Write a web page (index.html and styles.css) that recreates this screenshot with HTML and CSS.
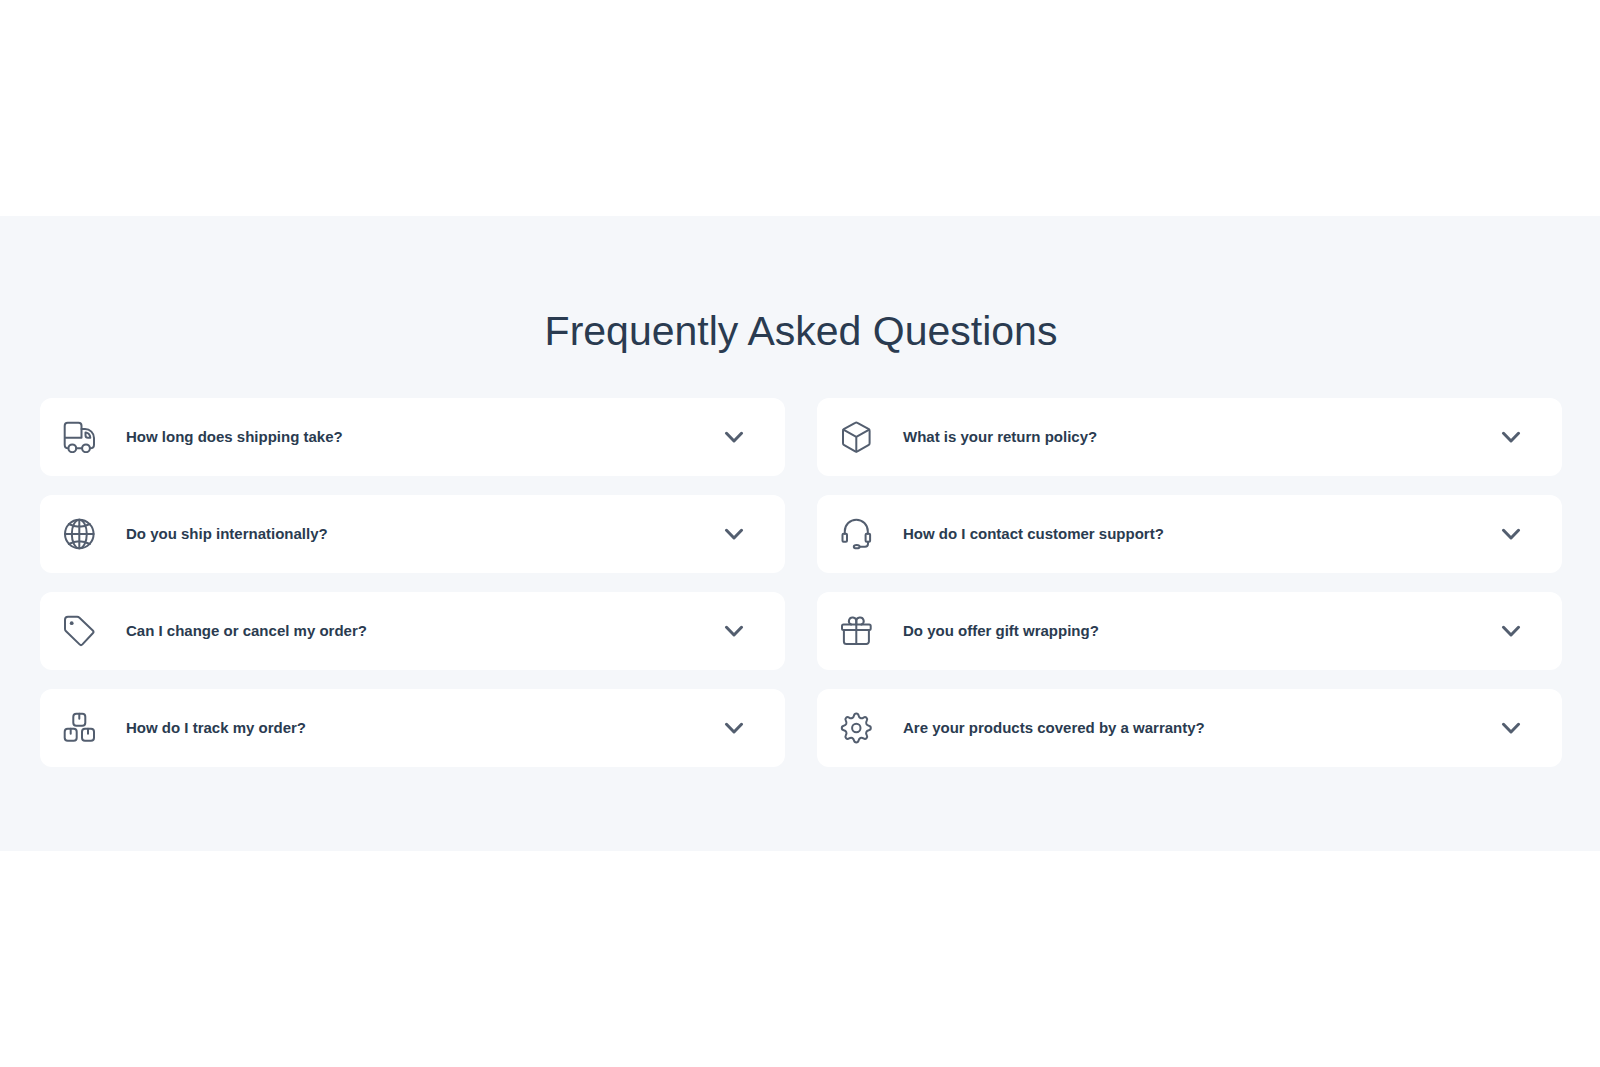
FILE: index.html
```html
<!DOCTYPE html>
<html lang="en">
<head>
    <meta charset="utf-8">
    <meta name="viewport" content="width=device-width, initial-scale=1">
    <title>Frequently Asked Questions</title>
    <link rel="stylesheet" href="styles.css">
</head>
<body>

<svg class="sprite" aria-hidden="true">
    <symbol id="chevron" viewBox="0 0 20 12">
        <path d="M2.5 2.3l7.5 7.7 7.5-7.7"/>
    </symbol>
</svg>

<section class="faq">
    <h2 class="faq-title">Frequently Asked Questions</h2>

    <div class="faq-grid">

        <button type="button" class="faq-item" aria-expanded="false">
            <svg class="icon" viewBox="0 0 32 32" aria-hidden="true">
                <path d="M5.3 27.3q-3.6 0-3.6-3.600V4.700a3 3 0 0 1 3-3h10.800a3 3 0 0 1 3 3v12H1.700"/>
                <path d="M18.500 8H22a9 9 0 0 1 9 9v6.700q0 3.600-4 3.600M13.300 27.300H19"/>
                <path d="M22.500 11.600h.8q3.700 1 4 5.200H25a2.500 2.500 0 0 1-2.500-2.500z"/>
                <circle cx="9.3" cy="27.3" r="3.9"/>
                <circle cx="23" cy="27.3" r="3.9"/>
            </svg>
            <span class="question">How long does shipping take?</span>
            <svg class="chevron" aria-hidden="true"><use href="#chevron"/></svg>
        </button>

        <button type="button" class="faq-item" aria-expanded="false">
            <svg class="icon" viewBox="0 0 32 32" aria-hidden="true">
                <path d="M15.2 1.8a2.2 2.2 0 0 1 2.2 0l11 6q1.2.7 1.2 2v12.4q0 1.3-1.2 2l-11 6.2a2.2 2.2 0 0 1-2.2 0l-11-6.2q-1.2-.7-1.2-2V9.8q0-1.3 1.2-2z"/>
                <path d="M3.4 8.6l12.9 7.2 12.9-7.2M16.3 15.8v14.8"/>
            </svg>
            <span class="question">What is your return policy?</span>
            <svg class="chevron" aria-hidden="true"><use href="#chevron"/></svg>
        </button>

        <button type="button" class="faq-item" aria-expanded="false">
            <svg class="icon" viewBox="0 0 32 32" aria-hidden="true">
                <circle cx="16.3" cy="16" r="14.3"/>
                <ellipse cx="16.3" cy="16" rx="7.5" ry="14.3"/>
                <path d="M16.3 1.7v28.6M2 16h28.6M5.8 6q10.5 5.5 21 0M5.8 26q10.5-5.5 21 0"/>
            </svg>
            <span class="question">Do you ship internationally?</span>
            <svg class="chevron" aria-hidden="true"><use href="#chevron"/></svg>
        </button>

        <button type="button" class="faq-item" aria-expanded="false">
            <svg class="icon" viewBox="0 0 32 32" aria-hidden="true">
                <path d="M4.8 15.7v-2.5a11.5 11.5 0 0 1 23 0v2.5"/>
                <rect x="2.5" y="15.7" width="4.5" height="8" rx="1"/>
                <rect x="25.6" y="15.7" width="4.5" height="8" rx="1"/>
                <path d="M28 23.7v2q0 3-3 3h-5"/>
                <ellipse cx="16.7" cy="28.7" rx="2.9" ry="1.6"/>
            </svg>
            <span class="question">How do I contact customer support?</span>
            <svg class="chevron" aria-hidden="true"><use href="#chevron"/></svg>
        </button>

        <button type="button" class="faq-item" aria-expanded="false">
            <svg class="icon" viewBox="0 0 32 32" aria-hidden="true">
                <path d="M5 1.7h9.2q1.2 0 2 .8l13.6 13q1.4 1.4 0 2.8L19.4 29.4q-1.4 1.4-2.8 0L2.8 16q-.8-.8-.8-2V4.700q0-3 3-3z"/>
                <circle class="dot" cx="8.7" cy="8.2" r="1.9"/>
            </svg>
            <span class="question">Can I change or cancel my order?</span>
            <svg class="chevron" aria-hidden="true"><use href="#chevron"/></svg>
        </button>

        <button type="button" class="faq-item" aria-expanded="false">
            <svg class="icon" viewBox="0 0 32 32" aria-hidden="true">
                <rect x="2" y="9.5" width="28.7" height="5.5" rx="1.5"/>
                <path d="M3.9 15v11.5A2.5 2.5 0 0 0 6.400 29h20a2.5 2.5 0 0 0 2.5-2.5V15M16.3 6v23"/>
                <path d="M16.3 9.5V6a3.7 3.7 0 1 0-5.2 3.5M16.3 6a3.7 3.7 0 1 1 5.2 3.5"/>
            </svg>
            <span class="question">Do you offer gift wrapping?</span>
            <svg class="chevron" aria-hidden="true"><use href="#chevron"/></svg>
        </button>

        <button type="button" class="faq-item" aria-expanded="false">
            <svg class="icon" viewBox="0 0 32 32" aria-hidden="true">
                <rect x="10.3" y="1.7" width="12" height="12" rx="3"/>
                <rect x="1.7" y="16.7" width="12" height="12" rx="3"/>
                <rect x="19" y="16.7" width="12" height="12" rx="3"/>
                <path d="M16.3 1.7v5M7.7 16.7v5M25 16.7v5"/>
            </svg>
            <span class="question">How do I track my order?</span>
            <svg class="chevron" aria-hidden="true"><use href="#chevron"/></svg>
        </button>

        <button type="button" class="faq-item" aria-expanded="false">
            <svg class="icon" viewBox="-16.3 -16 32 32" aria-hidden="true">
                <path d="M0-14.5C3.5-14.5 1.1-11.3 4.1-10 7.1-8.7 7.8-12.7 10.2-10.2 12.7-7.8 8.7-7.1 10-4.1 11.3-1.1 14.5-3.5 14.5 0 14.5 3.5 11.3 1.1 10 4.1 8.7 7.1 12.7 7.8 10.2 10.2 7.8 12.7 7.1 8.7 4.1 10 1.1 11.3 3.5 14.5 0 14.5-3.5 14.5-1.1 11.3-4.1 10-7.1 8.7-7.8 12.7-10.2 10.2-12.7 7.8-8.7 7.1-10 4.1-11.3 1.1-14.5 3.5-14.5 0-14.5-3.5-11.3-1.1-10-4.1-8.7-7.1-12.7-7.8-10.2-10.2-7.8-12.7-7.1-8.7-4.1-10-1.1-11.3-3.5-14.5 0-14.5z"/>
                <circle r="4.2"/>
            </svg>
            <span class="question">Are your products covered by a warranty?</span>
            <svg class="chevron" aria-hidden="true"><use href="#chevron"/></svg>
        </button>

    </div>
</section>

</body>
</html>
```
FILE: styles.css
```css
body {
  margin: 0;
  padding: 216px 0;
  background-color: #fff;
  color: #2a3b50;
  font-family: "Liberation Sans", Arial, sans-serif;
}

.sprite {
  display: none;
}

.faq {
  background-color: #f5f7fa;
  padding: 90px 38px 84px 40px;
}

.faq-title {
  margin: 0 0 42px;
  font-size: 41px;
  line-height: 50px;
  font-weight: 400;
  text-align: center;
}

.faq-grid {
  display: grid;
  grid-template-columns: 1fr 1fr;
  gap: 19px 32px;
}

.faq-item {
  display: flex;
  align-items: center;
  gap: 31px;
  padding: 23px 41px 23px 23px;
  border: none;
  border-radius: 12px;
  background-color: #fff;
  color: inherit;
  font-family: inherit;
  font-size: 15px;
  line-height: 24px;
  font-weight: 700;
  text-align: left;
  cursor: pointer;
}

.question {
  flex: 1;
}

.icon,
.chevron {
  flex: none;
  fill: none;
  stroke: #535e6f;
  stroke-width: 2;
  stroke-linecap: round;
  stroke-linejoin: round;
}

.icon {
  width: 32px;
  height: 32px;
}

.icon .dot {
  fill: #535e6f;
  stroke: none;
}

.chevron {
  width: 20px;
  height: 12px;
  stroke-width: 3;
}
```
